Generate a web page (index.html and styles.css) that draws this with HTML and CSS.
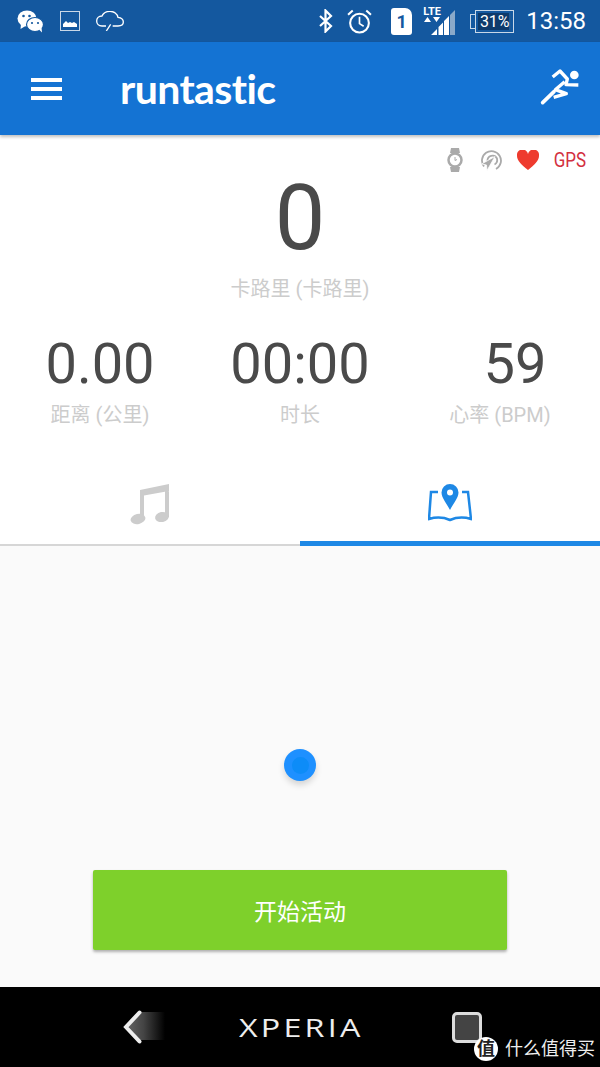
FILE: index.html
```html
<!DOCTYPE html>
<html lang="zh-CN">
<head>
    <meta charset="utf-8">
    <title>Runtastic</title>
    <meta name="viewport" content="width=device-width, initial-scale=1.0">
    <link rel="stylesheet" href="styles.css">
</head>

<body>
    <div class="app">
        <!-- Status bar -->
        <div class="status_bar">
            <div class="status_left">
                <svg class="icon_wechat" viewBox="0 0 27 23" width="27" height="23">
                    <ellipse cx="10" cy="8.500" rx="9.500" ry="8" fill="#fff"/>
                    <path d="M4 14l-.5 5 5-3z" fill="#fff"/>
                    <ellipse cx="18" cy="14.500" rx="8.500" ry="7" fill="#fff" stroke="#14589f" stroke-width="1.200"/>
                    <path d="M22 19.500l3 3-.5-5z" fill="#fff"/>
                    <circle cx="6.500" cy="6" r="1.300" fill="#14589f"/>
                    <circle cx="12.500" cy="6" r="1.300" fill="#14589f"/>
                    <circle cx="15" cy="13" r="1.100" fill="#14589f"/>
                    <circle cx="21" cy="13" r="1.100" fill="#14589f"/>
                </svg>
                <svg class="icon_image" viewBox="0 0 20 20" width="20" height="20">
                    <rect x=".5" y=".5" width="19" height="19" fill="none" stroke="#c9d8e8" stroke-width="1"/>
                    <path d="M3 16v-3l3-3 2 2 2-1 2 1 2-1 3 2v3z" fill="#fff"/>
                </svg>
                <svg class="icon_cloud" viewBox="0 0 84 60" width="28" height="20">
                    <path d="M30 45H18C8 45 2 38 2 30 2 22 8 15 18 15 22 6 32 1 42 1 54 1 64 9 66 19 76 20 82 26 82 33 82 40 76 45 66 45H50" fill="none" stroke="#fff" stroke-width="4"/>
                    <path d="M44 40L31 60" fill="none" stroke="#fff" stroke-width="4"/>
                </svg>
            </div>
            <div class="status_right">
                <svg class="icon_bt" viewBox="0 0 16 24" width="16" height="24">
                    <path d="M2 7l11 10-5.500 5.500v-21L13 7 2 17" fill="none" stroke="#fff" stroke-width="2.200"/>
                </svg>
                <svg class="icon_alarm" viewBox="0 0 24 24" width="25" height="25">
                    <circle cx="12" cy="13.500" r="9" fill="none" stroke="#fff" stroke-width="2"/>
                    <path d="M12 7.500v6.500l4 2.500" fill="none" stroke="#fff" stroke-width="1.600"/>
                    <path d="M1 5.500L5.500 1.500M23 5.500L18.500 1.500" fill="none" stroke="#fff" stroke-width="2"/>
                </svg>
                <div class="sim_card">1</div>
                <div class="signal">
                    <span class="lte_label">LTE</span>
                    <svg viewBox="0 0 33 29" width="33" height="29">
                        <path d="M1 15l3.500-5 3.500 5zM10 10h7l-3.500 5z" fill="#fff"/>
                        <path d="M8 28l6-6v6zM15.500 28v-8l4.500-4.500V28zM21 28V14l5-5v19z" fill="#fff"/>
                        <path d="M27 28V8l5-5v25z" fill="#8aa9c9"/>
                    </svg>
                </div>
                <div class="battery">
                    <span class="battery_cap"></span>
                    <span class="battery_level">31%</span>
                </div>
                <span class="clock">13:58</span>
            </div>
        </div>

        <!-- Toolbar -->
        <div class="toolbar">
            <div class="menu_button">
                <span></span><span></span><span></span>
            </div>
            <div class="logo">runtastic</div>
            <svg class="icon_runner" viewBox="0 0 180 165" width="60" height="55">
                <circle cx="133" cy="42" r="13" fill="#fff"/>
                <path d="M68 48L90 30l22 24-4 17 37 1" fill="none" stroke="#fff" stroke-width="10" stroke-linejoin="round"/>
                <path d="M104 62L76 86l33 12-38 11" fill="none" stroke="#fff" stroke-width="10" stroke-linejoin="round"/>
                <path d="M72 92L38 125" fill="none" stroke="#fff" stroke-width="11" stroke-linecap="round"/>
            </svg>
        </div>

        <!-- Session stats -->
        <div class="stats_panel">
            <div class="sensor_row">
                <svg class="icon_watch" viewBox="0 0 16 24" width="16" height="24">
                    <path d="M4 0h8l1 5H3zM3 19h10l-1 5H4z" fill="#aaa"/>
                    <circle cx="8" cy="12" r="6.500" fill="#fff" stroke="#aaa" stroke-width="2.500"/>
                    <path d="M8 9v3.500l2-1" fill="none" stroke="#aaa" stroke-width="1"/>
                </svg>
                <svg viewBox="0 0 21 21" width="21" height="21">
                    <path d="M3 16.500A9.500 9.500 0 1 1 15 19" fill="none" stroke="#aaa" stroke-width="1.800"/>
                    <path d="M6.500 11A5 5 0 0 1 16 8.500C16.500 11 15.500 13.500 13.500 14.500" fill="none" stroke="#aaa" stroke-width="1.800"/>
                    <path d="M.5 14L14 6.500 6 20.500 5.500 15z" fill="#aaa" stroke="#fff" stroke-width=".8"/>
                </svg>
                <svg viewBox="0 0 22 20" width="22" height="20">
                    <path d="M11 20C5 15 0 11 0 6a5.500 5.500 0 0 1 11-2 5.500 5.500 0 0 1 11 2c0 5-5 9-11 14z" fill="#ee3b2e"/>
                </svg>
                <span class="gps_label">GPS</span>
            </div>

            <div class="calories">
                <div class="calories_value">0</div>
                <div class="stat_label">卡路里 (卡路里)</div>
            </div>

            <div class="stat_row">
                <div class="stat_item">
                    <div class="stat_value">0.00</div>
                    <div class="stat_label">距离 (公里)</div>
                </div>
                <div class="stat_item">
                    <div class="stat_value">00:00</div>
                    <div class="stat_label">时长</div>
                </div>
                <div class="stat_item">
                    <div class="stat_value stat_value_heart">59</div>
                    <div class="stat_label">心率 (BPM)</div>
                </div>
            </div>

            <div class="tabs">
                <div class="tab">
                    <svg viewBox="0 0 40 42" width="40" height="42">
                        <path d="M10 7L39 1v7L14 12.500V36h-4zM35 4h4v30h-4z" fill="#ccc"/>
                        <ellipse cx="8" cy="36" rx="7.500" ry="5" fill="#ccc" transform="rotate(-12 8 36)"/>
                        <ellipse cx="32" cy="34" rx="7" ry="5" fill="#ccc" transform="rotate(-12 32 34)"/>
                    </svg>
                </div>
                <div class="tab tab_active">
                    <svg viewBox="0 0 44 39" width="44" height="39">
                        <path d="M10 9H3L1 36c7-2 14-2 21 1 7-3 14-3 21-1l-3-27h-6" fill="none" stroke="#1e88e5" stroke-width="2.500"/>
                        <path fill-rule="evenodd" d="M22 1a8.500 8.500 0 0 1 8.500 8.500C30.500 15 25 21 22 27 19 21 13.500 15 13.500 9.500A8.500 8.500 0 0 1 22 1zm0 5.500a3 3 0 1 0 0 6 3 3 0 0 0 0-6z" fill="#1e88e5"/>
                    </svg>
                </div>
            </div>
        </div>

        <!-- Map area -->
        <div class="map_area">
            <div class="location_dot"><span></span></div>
            <button class="start_button">开始活动</button>
        </div>

        <!-- Navigation bar -->
        <div class="nav_bar">
            <div class="nav_back">
                <svg viewBox="0 0 20 34" width="20" height="34">
                    <path d="M16.500 2.500L3 17l13.500 14.500" fill="none" stroke="#eee" stroke-width="4" stroke-linecap="round"/>
                </svg>
            </div>
            <div class="nav_brand"><span>XPERIA</span></div>
            <div class="nav_recent"></div>
        </div>

        <div class="watermark">
            <span class="watermark_badge">值</span>
            <span class="watermark_text">什么值得买</span>
        </div>
    </div>
</body>
</html>
```

FILE: styles.css
```css
/* Base CSS */
html, body {
    margin: 0;
    padding: 0;
    background: #000;
    font-family: Roboto, "Noto Sans CJK SC", sans-serif;
}

svg {
    display: block;
}

.app {
    position: relative;
    display: flex;
    flex-direction: column;
    width: 600px;
    height: 1067px;
    overflow: hidden;
}

/* Status bar */
.status_bar {
    display: flex;
    justify-content: space-between;
    align-items: center;
    flex: none;
    height: 42px;
    padding: 0 14px 0 17px;
    background: #14589f;
    color: #fff;
}

.status_left {
    display: flex;
    align-items: center;
    gap: 16px;
}

.status_right {
    display: flex;
    align-items: center;
}

.icon_bt {
    margin-right: 13px;
}

.icon_alarm {
    margin-right: 19px;
}

.sim_card {
    width: 21px;
    height: 27px;
    margin-right: 11px;
    border-radius: 3px 7px 3px 3px;
    background: #fff;
    color: #14589f;
    font-size: 18px;
    font-weight: 700;
    line-height: 28px;
    text-align: center;
}

.signal {
    position: relative;
    width: 33px;
    height: 29px;
    margin-right: 14px;
}

.lte_label {
    position: absolute;
    top: -1px;
    left: 0;
    font-size: 11px;
    font-weight: 700;
    line-height: 12px;
}

.battery {
    display: flex;
    align-items: center;
    margin-right: 12px;
}

.battery_cap {
    width: 4px;
    height: 13px;
    border: 1px solid #c9d8e8;
    border-right: 0;
}

.battery_level {
    box-sizing: border-box;
    width: 39px;
    height: 23px;
    padding: 2px;
    border: 1px solid #c9d8e8;
    background: linear-gradient(to right, #0e3a6b 88%, #1c5a99 88%);
    background-clip: content-box;
    font-size: 16px;
    line-height: 17px;
    text-align: center;
}

.clock {
    font-size: 24px;
    line-height: 42px;
}

/* Toolbar */
.toolbar {
    position: relative;
    z-index: 2;
    display: flex;
    align-items: center;
    flex: none;
    height: 93px;
    padding: 0 10px 0 31px;
    background: #1473d3;
    box-shadow: 0 2px 3px rgba(0, 0, 0, 0.25);
}

.menu_button {
    display: flex;
    flex-direction: column;
    gap: 5px;
    width: 31px;
}

.menu_button span {
    height: 4px;
    background: #fff;
}

.logo {
    flex: 1;
    margin-left: 58px;
    color: #fff;
    font-family: Lato, sans-serif;
    font-size: 41px;
    font-weight: 700;
    line-height: 50px;
    letter-spacing: -0.6px;
}

/* Session stats */
.stats_panel {
    flex: none;
    height: 411px;
    background: #fff;
}

.sensor_row {
    display: flex;
    justify-content: flex-end;
    align-items: center;
    gap: 15px;
    height: 24px;
    padding: 13px 14px 0 0;
}

.icon_watch {
    margin-right: 3px;
}

.gps_label {
    margin-left: -6px;
    color: #d3313f;
    font-size: 20px;
    line-height: 24px;
    transform: scaleX(0.85);
    transform-origin: right center;
}

.calories {
    margin-top: -3px;
    text-align: center;
}

.calories_value {
    margin-bottom: 7px;
    color: #4a4a4a;
    font-size: 90px;
    line-height: 100px;
}

.stat_label {
    color: #ccc;
    font-size: 20px;
    line-height: 26px;
}

.stat_row {
    display: grid;
    grid-template-columns: repeat(3, 200px);
    margin-top: 29px;
    text-align: center;
}

.stat_value {
    margin-bottom: 5px;
    color: #4a4a4a;
    font-size: 56px;
    line-height: 66px;
}

.stat_value_heart {
    padding-left: 30px;
}

.tabs {
    display: flex;
    height: 80px;
    margin-top: 36px;
    border-bottom: 2px solid #d6d6d6;
}

.tab {
    display: flex;
    justify-content: center;
    flex: 1;
    padding-top: 19px;
}

.tab_active {
    margin-bottom: -2px;
    border-bottom: 5px solid #1e88e5;
}

/* Map area */
.map_area {
    display: flex;
    flex-direction: column;
    align-items: center;
    flex: 1;
    background: #fafafa;
}

.location_dot {
    display: flex;
    justify-content: center;
    align-items: center;
    width: 32px;
    height: 32px;
    margin-top: 203px;
    border-radius: 50%;
    background: #1e90ff;
    box-shadow: 0 4px 6px rgba(0, 0, 0, 0.15);
}

.location_dot span {
    width: 17px;
    height: 17px;
    border-radius: 50%;
    background: #0d8cf8;
}

.start_button {
    width: 414px;
    height: 80px;
    margin-top: 89px;
    border: 0;
    border-radius: 2px;
    background: #7ed02b;
    box-shadow: 0 2px 3px rgba(0, 0, 0, 0.3);
    color: #fff;
    font-family: Roboto, "Noto Sans CJK SC", sans-serif;
    font-size: 23px;
}

/* Navigation bar */
.nav_bar {
    display: flex;
    align-items: center;
    flex: none;
    height: 80px;
    background: #000;
}

.nav_back {
    position: relative;
    width: 42px;
    height: 34px;
    margin-left: 123px;
}

.nav_back::before {
    content: "";
    position: absolute;
    top: 2px;
    left: 3px;
    width: 39px;
    height: 28px;
    background: linear-gradient(to right, #666 0%, #444 45%, #000 100%);
    clip-path: polygon(14px 0, 100% 0, 100% 100%, 14px 100%, 2px 50%);
}

.nav_back svg {
    position: relative;
}

.nav_brand {
    width: 122px;
    margin-left: 74px;
    color: #eee;
    font-family: "Open Sans", sans-serif;
    font-size: 25px;
    letter-spacing: 2.5px;
    line-height: 30px;
    white-space: nowrap;
}

.nav_brand span {
    display: inline-block;
    transform: scaleX(1.29);
    transform-origin: left center;
}

.nav_recent {
    box-sizing: border-box;
    width: 30px;
    height: 31px;
    margin-left: 91px;
    border: 3px solid #ddd;
    border-radius: 5px;
    background: #444;
}

/* Watermark over the navigation bar */
.watermark {
    position: absolute;
    right: 5px;
    bottom: 6px;
    display: flex;
    align-items: center;
    gap: 7px;
}

.watermark_badge {
    width: 24px;
    height: 24px;
    border-radius: 50%;
    background: #fff;
    color: #222;
    font-size: 18px;
    font-weight: 700;
    line-height: 24px;
    text-align: center;
}

.watermark_text {
    color: #eee;
    font-size: 18px;
    line-height: 24px;
}
```
